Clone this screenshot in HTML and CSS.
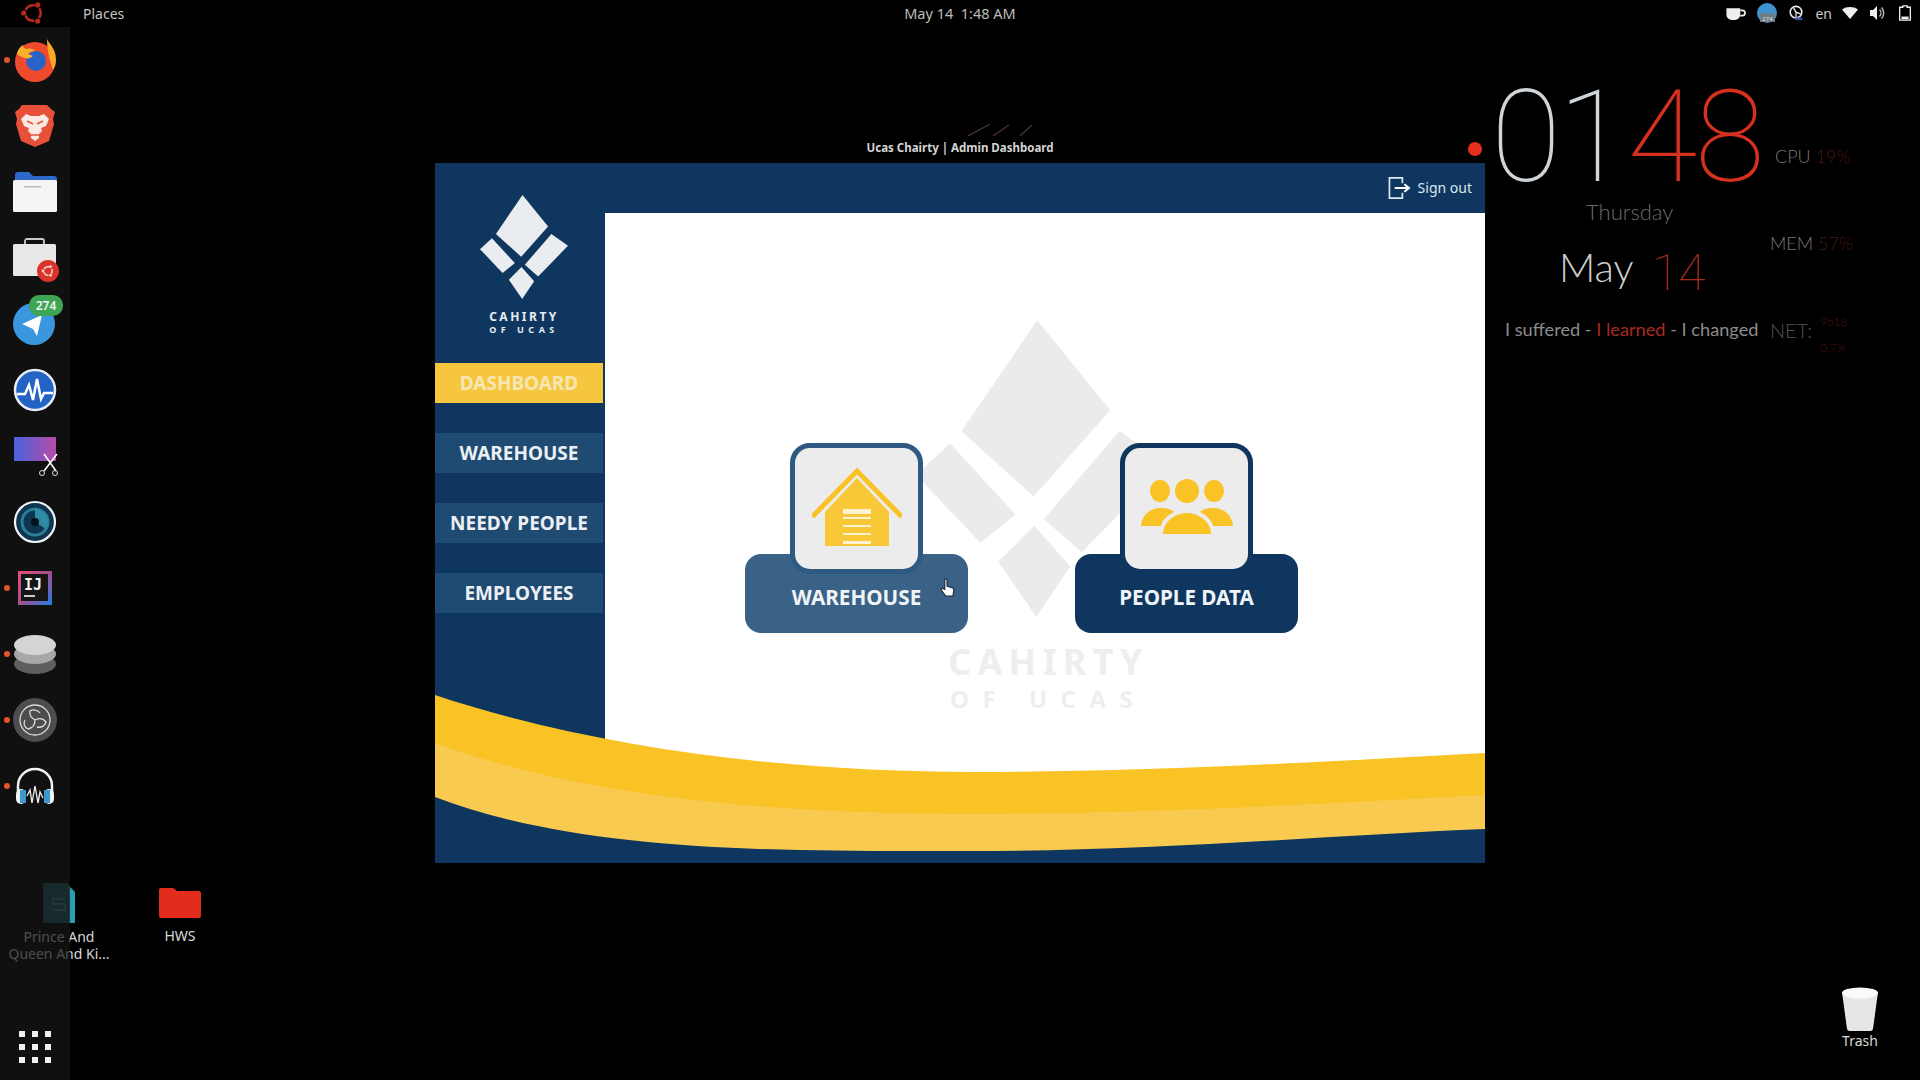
FILE: index.html
```html
<!DOCTYPE html>
<html lang="en">
<head>
<meta charset="utf-8">
<title>Ucas Chairty | Admin Dashboard</title>
<link rel="stylesheet" href="styles.css">
</head>
<body>
<svg class="defs" width="0" height="0">
  <symbol id="logo" viewBox="150 255 265 313">
    <path d="M278 255 355 350 274 441 198 372Z"/>
    <path d="M150 418 186 385 255 460 218 490Z"/>
    <path d="M285 465 365 372 415 408 325 500Z"/>
    <path d="M237 510 275 472 313 515 277 568Z"/>
  </symbol>
  <symbol id="ubuntu" viewBox="0 0 24 24">
    <circle cx="12" cy="12" r="7.2" fill="none" stroke="currentColor" stroke-width="2.4" stroke-dasharray="10 5.08" stroke-dashoffset="5"/>
    <circle cx="3.400" cy="12" r="2.400" fill="currentColor"/>
    <circle cx="16.300" cy="4.550" r="2.400" fill="currentColor"/>
    <circle cx="16.300" cy="19.450" r="2.400" fill="currentColor"/>
  </symbol>
</svg>
<div class="screen">
  <header class="topbar">
    <div class="topbar-left">
      <svg class="ubuntu-logo"><use href="#ubuntu"/></svg>
      <span class="places">Places</span>
    </div>
    <div class="clock-center">May 14&nbsp;&nbsp;1:48 AM</div>
    <div class="tray">
      <svg class="tray-icon tray-cup" viewBox="0 0 20 16"><path d="M1 3h13v6a5 5 0 0 1-5 5H6a5 5 0 0 1-5-5z" fill="#eee"/><path d="M14 5h2a2 2 0 0 1 0 5h-2" fill="none" stroke="#eee" stroke-width="1.600"/></svg>
      <svg class="tray-icon tray-tg" viewBox="0 0 20 20"><circle cx="10" cy="10" r="10" fill="#3d93cf"/><rect x="3" y="10" width="15" height="9" fill="#6d7d88"/><text x="10.500" y="17.500" class="tray-num">274</text></svg>
      <svg class="tray-icon" viewBox="0 0 18 18"><circle cx="9" cy="8" r="6.500" fill="none" stroke="#eee" stroke-width="1.800"/><path d="M9 8 6 3M9 8l5 2M9 8v6" stroke="#eee" stroke-width="1.400"/><rect x="8" y="14" width="8" height="3" fill="#3856a8"/></svg>
      <span class="tray-lang">en</span>
      <svg class="tray-icon tray-wifi" viewBox="0 0 16 12"><path d="M0 2.500C4-.8 12-.8 16 2.500L8 12Z" fill="#eee"/></svg>
      <svg class="tray-icon" viewBox="0 0 16 16"><path d="M1 5h3l4-4v14l-4-4H1z" fill="#eee"/><path d="M10.500 4.500a5 5 0 0 1 0 7M12.500 2.500a8 8 0 0 1 0 11" fill="none" stroke="#bbb" stroke-width="1.400"/></svg>
      <svg class="tray-icon" viewBox="0 0 14 18"><path d="M4.500 1h5v1.500H13V17H1V2.500h3.500z" fill="none" stroke="#eee" stroke-width="1.500"/><rect x="3" y="13" width="8" height="3" fill="#eee"/></svg>
    </div>
  </header>

  <nav class="dock">
    <div class="dock-item running">
      <svg class="dock-icon" viewBox="0 0 48 48"><circle cx="24" cy="26" r="20" fill="#f04a2d"/><path d="M36 3c2 5 9 9 9 21 0 4-1 7-3 10-2-7-6-17-6-31Z" fill="#f9a825"/><circle cx="25" cy="25" r="10" fill="#2a62c8"/><path d="M6 18c1-5 4-8 6-9 0 3 2 4 4 4 4-1 6 0 8 2-3 0-6 1-7 3l5 2c-3 3-8 3-11 1-2-1-4-2-5-3Z" fill="#fbb02b"/></svg>
    </div>
    <div class="dock-item">
      <svg class="dock-icon" viewBox="0 0 48 48"><path d="M11 3h25l4 4 4 3-2 7 1 5-5 17-14 6-14-6L5 22l1-5-2-7 4-3Z" fill="#e8503a"/><path d="M15 12l5 2h8l5-2 5 5-3 7-5 2 1 3-3 3v4l-4 3-4-3v-4l-3-3 1-3-5-2-3-7Z" fill="#fbe9e4"/><path d="M16 19l6 3M32 19l-6 3M20 33h8" stroke="#e8503a" stroke-width="1.600"/></svg>
    </div>
    <div class="dock-item">
      <svg class="dock-icon" viewBox="0 0 48 48"><path d="M4 7a3 3 0 0 1 3-3h11l4 4h21a3 3 0 0 1 3 3v5H4Z" fill="#2d68cc"/><rect x="2" y="12" width="44" height="32" rx="1.500" fill="#f5f5f5"/><rect x="13" y="18" width="17" height="1.500" fill="#bbb"/></svg>
    </div>
    <div class="dock-item">
      <svg class="dock-icon" viewBox="0 0 48 48"><path d="M14 11V7a2 2 0 0 1 2-2h15a2 2 0 0 1 2 2v4" fill="none" stroke="#ccc" stroke-width="1.800"/><rect x="2" y="10" width="43" height="32" rx="1.500" fill="#e8e8e8"/><circle cx="37" cy="37" r="11" fill="#d8342b"/><svg x="30" y="30" width="14" height="14" color="#f6d6d0"><use href="#ubuntu"/></svg></svg>
    </div>
    <div class="dock-item">
      <svg class="dock-icon" viewBox="0 0 48 48"><circle cx="23" cy="24" r="21" fill="#3a97dd"/><path d="M11 24 31 15 26 36 22 29Z" fill="#fff"/></svg>
      <span class="badge">274</span>
    </div>
    <div class="dock-item">
      <svg class="dock-icon" viewBox="0 0 48 48"><circle cx="24" cy="24" r="20" fill="#2263c4" stroke="#e8eef8" stroke-width="2.500"/><path d="M6 28h8l4-9 4 15 4-21 4 20 3-6h9" fill="none" stroke="#fff" stroke-width="2.500"/></svg>
    </div>
    <div class="dock-item">
      <svg class="dock-icon" viewBox="0 0 48 48"><defs><linearGradient id="shot" x1="0" x2="1"><stop offset="0" stop-color="#4a62dc"/><stop offset="1" stop-color="#b84ba8"/></linearGradient></defs><rect x="3" y="5" width="42" height="24" fill="url(#shot)"/><path d="M33 22l12 17M46 22 33 39" stroke="#fff" stroke-width="1.500"/><circle cx="31" cy="41" r="2.500" fill="none" stroke="#ddd"/><circle cx="44" cy="41" r="2.500" fill="none" stroke="#ddd"/></svg>
    </div>
    <div class="dock-item">
      <svg class="dock-icon" viewBox="0 0 48 48"><circle cx="24" cy="24" r="20" fill="#0f3551" stroke="#f0f4f6" stroke-width="2.200"/><circle cx="24" cy="24" r="13" fill="none" stroke="#2a7f96" stroke-width="3"/><path d="M24 24V11a13 13 0 0 1 11 20Z" fill="#2f8ba6"/><circle cx="24" cy="24" r="4" fill="#04121f"/></svg>
    </div>
    <div class="dock-item running">
      <svg class="dock-icon" viewBox="0 0 48 48"><defs><linearGradient id="ij" x1="0" y1="0" x2="1" y2="1"><stop offset="0" stop-color="#ee4b7c"/><stop offset=".5" stop-color="#a4508f"/><stop offset="1" stop-color="#1f7de0"/></linearGradient></defs><rect x="7" y="7" width="34" height="34" fill="url(#ij)"/><rect x="10" y="10" width="27" height="27" fill="#151515"/><text x="13" y="26" class="ij-text">IJ</text><rect x="13" y="31" width="11" height="2" fill="#ccc"/></svg>
    </div>
    <div class="dock-item running">
      <svg class="dock-icon" viewBox="0 0 48 48"><ellipse cx="24" cy="34" rx="21" ry="10" fill="#5e5e5e"/><ellipse cx="24" cy="24" rx="21" ry="10" fill="#a8a8a8"/><ellipse cx="24" cy="15" rx="21" ry="10" fill="#d4d4d4"/></svg>
    </div>
    <div class="dock-item running">
      <svg class="dock-icon" viewBox="0 0 48 48"><circle cx="24" cy="24" r="22" fill="#4d4d4d"/><circle cx="24" cy="24" r="15" fill="none" stroke="#ddd" stroke-width="1.300"/><path d="M24 24c-3-2-6-4-5-9 3-2 8-1 10 2M24 24c0 4-2 8-7 9-4-2-5-6-3-9M24 24c4-2 8-2 11 2-1 4-5 6-9 5" fill="none" stroke="#dcdcdc" stroke-width="1.300"/></svg>
    </div>
    <div class="dock-item running">
      <svg class="dock-icon" viewBox="0 0 48 48"><path d="M7 30V24a17 17 0 0 1 34 0v6" fill="none" stroke="#f4f4f4" stroke-width="2.500"/><rect x="5" y="27" width="10" height="15" rx="5" fill="#f2f2f2"/><rect x="9" y="28" width="6" height="13" fill="#3a97cf"/><rect x="33" y="27" width="10" height="15" rx="5" fill="#f2f2f2"/><rect x="33" y="28" width="6" height="13" fill="#3a97cf"/><path d="M16 34l3-6 2 13 3-17 3 17 2-11 3 6" fill="none" stroke="#e8e8e8" stroke-width="1.400"/></svg>
    </div>
    <div class="dock-spacer"></div>
    <div class="apps-grid">
      <i></i><i></i><i></i><i></i><i></i><i></i><i></i><i></i><i></i>
    </div>
  </nav>

  <div class="desk-icon desk-sublime">
    <svg class="desk-glyph" viewBox="0 0 32 40"><path d="M0 0h23l9 9v31H0Z" fill="#1d5a62"/><path d="M23 0l9 9v31h-6V5Z" fill="#2b9bb0"/><path d="M22 16H10v5h12v6H9" fill="none" stroke="#5b8d93" stroke-width="1.500"/></svg>
    <span>Prince And<br>Queen And Ki...</span>
  </div>
  <div class="desk-icon desk-hws">
    <svg class="desk-glyph" viewBox="0 0 42 30"><path d="M0 2a2 2 0 0 1 2-2h12l4 3h22a2 2 0 0 1 2 2v23a2 2 0 0 1-2 2H2a2 2 0 0 1-2-2Z" fill="#e42c1c"/></svg>
    <span>HWS</span>
  </div>
  <div class="desk-icon desk-trash">
    <svg class="desk-glyph" viewBox="0 0 38 44"><path d="M1 5 6 42a3 3 0 0 0 3 2h20a3 3 0 0 0 3-2l5-37Z" fill="#e6e6e6"/><ellipse cx="19" cy="6" rx="18" ry="5.500" fill="#fafafa"/></svg>
    <span>Trash</span>
  </div>

  <section class="widget">
    <div class="w-time"><span class="w-white">01</span><span class="w-red">48</span></div>
    <div class="w-day">Thursday</div>
    <div class="w-month">May</div>
    <div class="w-date">14</div>
    <div class="w-motto">I suffered - <b>I learned</b> - I changed</div>
    <div class="w-stat w-cpu">CPU <b>19%</b></div>
    <div class="w-stat w-mem">MEM <b>57%</b></div>
    <div class="w-stat w-net">NET:</div>
    <div class="w-netval w-net1">9b18</div>
    <div class="w-netval w-net2">0.7%</div>
  </section>

  <svg class="streaks" viewBox="0 0 70 14"><path d="M0 14 22 2M25 14 41 3M52 14 64 3" stroke="#4d3030" stroke-width="1.400" fill="none"/></svg>
  <div class="win-title">Ucas Chairty | Admin Dashboard</div>
  <div class="rec-dot"></div>

  <main class="window">
    <aside class="sidebar">
      <div class="brand">
        <svg class="brand-mark"><use href="#logo"/></svg>
        <div class="brand-name">CAHIRTY</div>
        <div class="brand-sub">OF UCAS</div>
      </div>
      <div class="menu">
        <a class="menu-item active">DASHBOARD</a>
        <a class="menu-item">WAREHOUSE</a>
        <a class="menu-item">NEEDY PEOPLE</a>
        <a class="menu-item">EMPLOYEES</a>
      </div>
    </aside>
    <div class="panel">
      <div class="panel-head">
        <a class="signout">
          <svg class="signout-icon" viewBox="0 0 24 24"><path d="M15 7V1.500H1.500v21H15V17" fill="none" stroke="#dbe6f2" stroke-width="1.800"/><path d="M7 12h14M17 8l5 4-5 4" fill="none" stroke="#fff" stroke-width="2"/></svg>
          <span>Sign out</span>
        </a>
      </div>
      <div class="content">
        <div class="watermark">
          <svg class="wm-mark"><use href="#logo"/></svg>
          <div class="wm-name">CAHIRTY</div>
          <div class="wm-sub">OF UCAS</div>
        </div>
        <div class="cards">
          <div class="card card-hover">
            <div class="card-icon">
              <svg class="card-glyph" viewBox="0 0 90 84"><path d="M2 50 45 6l43 44" fill="none" stroke="#f9c225" stroke-width="5" stroke-linecap="round"/><path d="M13 47 45 13l32 34v34H13Z" fill="#f9c838"/><rect x="31" y="44" width="28" height="5" fill="#fff3cf"/><rect x="31" y="52" width="28" height="2" fill="#fff3cf"/><rect x="31" y="60" width="28" height="2" fill="#fff3cf"/><rect x="31" y="68" width="28" height="2" fill="#fff3cf"/><rect x="31" y="76" width="28" height="3" fill="#fff3cf"/></svg>
            </div>
            <div class="card-label">WAREHOUSE</div>
            <svg class="hand" viewBox="0 0 16 22"><path d="M5 2c0-1.500 2.500-1.500 2.500 0v7l6 2c1 .5 1.500 1 1.500 2l-1 7H6L1 13c0-2 2-2 4-.5Z" fill="#fff" stroke="#1d2b3a" stroke-width="1.300"/></svg>
          </div>
          <div class="card">
            <div class="card-icon">
              <svg class="card-glyph people" viewBox="0 0 92 62"><ellipse cx="19" cy="12" rx="10" ry="11" fill="#f9c225"/><ellipse cx="46" cy="12" rx="12" ry="12" fill="#f9c225"/><ellipse cx="73" cy="12" rx="10" ry="11" fill="#f9c225"/><path d="M0 47c1-12 10-18 20-18 5 0 10 1 13 4-6 3-12 8-13 14Z" fill="#f9c225"/><path d="M92 47c-1-12-10-18-20-18-5 0-10 1-13 4 6 3 12 8 13 14Z" fill="#f9c225"/><path d="M22 55c0-12 12-21 24-21s24 9 24 21Z" fill="#f9c225"/></svg>
            </div>
            <div class="card-label">PEOPLE DATA</div>
          </div>
        </div>
      </div>
    </div>
    <svg class="wave" viewBox="0 0 1050 700" preserveAspectRatio="none">
      <path d="M0 532C150 582 340 609 541 609 720 609 900 598 1050 590V700H0Z" fill="#f9c225"/>
      <path d="M0 580C150 635 340 651 541 651 720 651 900 640 1050 632V700H0Z" fill="#f8cb50"/>
      <path d="M0 634C150 692 360 688 541 688 720 688 900 672 1050 666V700H0Z" fill="#0e365f"/>
    </svg>
  </main>
</div>
</body>
</html>
```
FILE: styles.css
```css
* { box-sizing: border-box; }
html, body { margin: 0; height: 100%; background: #000; }
body { font-family: "Noto Sans", "Open Sans", sans-serif; color: #ddd; overflow: hidden; }
.defs { position: absolute; }
.screen { position: relative; width: 1920px; height: 1080px; background: #000; overflow: hidden; }

/* top bar */
.topbar { position: relative; height: 27px; padding-bottom: 2px; display: grid; grid-template-columns: 1fr auto 1fr; align-items: center; font-size: 14px; color: #c8c8c8; }
.topbar-left { display: flex; align-items: center; padding-left: 20px; gap: 37px; }
.ubuntu-logo { width: 26px; height: 26px; color: #b8271c; }
.places { color: #c4c4c4; }
.clock-center { font-size: 14.5px; color: #bdbdbd; }
.tray { display: flex; justify-content: flex-end; align-items: center; gap: 10px; padding-right: 6px; }
.tray-icon { width: 18px; height: 16px; }
.tray-cup { width: 22px; height: 17px; }
.tray-tg { width: 20px; height: 20px; }
.tray-wifi { width: 16px; height: 12px; }
.tray-num { font-size: 6px; fill: #ddd; text-anchor: middle; font-family: "Noto Sans", sans-serif; }
.tray-lang { font-size: 14px; color: #c8c8c8; }

/* dock */
.dock { position: relative; z-index: 2; width: 70px; height: 1053px; background: rgba(22, 22, 22, .72); display: flex; flex-direction: column; align-items: center; }
.dock-item { position: relative; width: 70px; height: 66px; flex: none; display: flex; align-items: center; justify-content: center; }
.dock-icon { width: 48px; height: 48px; }
.ij-text { font-family: "DejaVu Sans Mono", monospace; font-weight: 700; font-size: 15px; fill: #f2f2f2; }
.dock-item.running::before { content: ""; position: absolute; left: 4px; top: 30px; width: 6px; height: 6px; border-radius: 50%; background: #e2562a; }
.badge { position: absolute; left: 29px; top: 4px; width: 34px; height: 21px; border-radius: 10px; background: #3ea653; color: #f2f2f2; font-size: 12px; font-weight: 600; text-align: center; line-height: 21px; }
.dock-spacer { flex: 1; }
.apps-grid { display: grid; grid-template-columns: repeat(3, 6px); gap: 7px; margin-bottom: 17px; }
.apps-grid i { width: 6px; height: 6px; background: #f0f0f0; }

/* desktop icons */
.desk-icon { position: absolute; z-index: 1; display: flex; flex-direction: column; align-items: center; text-align: center; font-size: 14px; line-height: 17px; color: #d8d8d8; }
.desk-icon span { margin-top: 5px; }
.desk-sublime { left: 0; top: 883px; width: 118px; }
.desk-sublime .desk-glyph { width: 32px; height: 40px; }
.desk-hws { left: 140px; top: 888px; width: 80px; }
.desk-hws .desk-glyph { width: 42px; height: 30px; }
.desk-hws span { margin-top: 9px; }
.desk-trash { left: 1820px; top: 987px; width: 80px; }
.desk-trash .desk-glyph { width: 38px; height: 44px; }
.desk-trash span { margin-top: 1px; }

/* conky widget */
.widget { position: absolute; left: 1480px; top: 60px; width: 420px; height: 320px; font-family: "Lato", "Roboto", sans-serif; font-weight: 300; }
.widget > div { position: absolute; white-space: nowrap; }
.w-time { left: 11px; top: 27px; font-family: "Roboto", sans-serif; font-weight: 100; font-size: 128px; line-height: 100px; display: flex; gap: 2px; }
.w-white { color: #cfd4d8; letter-spacing: -3px; }
.w-red { color: #d8301f; letter-spacing: -2.500px; }
.w-day { left: 106px; top: 139px; font-size: 22px; line-height: 26px; color: #6a6a6a; }
.w-month { left: 79px; top: 183px; font-size: 40px; line-height: 48px; color: #cfcfcf; }
.w-date { left: 172px; top: 184px; font-family: "Roboto", sans-serif; font-weight: 100; font-size: 50px; line-height: 58px; color: #a82a1f; letter-spacing: -1px; }
.w-motto { left: 25px; top: 258px; font-size: 18.2px; color: #8c8c8c; font-weight: 400; }
.w-motto b { color: #a82a1f; font-weight: 400; }
.w-stat { font-size: 18px; color: #777; }
.w-stat b { color: #4a1610; font-weight: 300; }
.w-cpu { left: 295px; top: 85px; }
.w-mem { left: 290px; top: 172px; }
.w-net { left: 290px; top: 258px; font-size: 20px; color: #555; }
.w-netval { font-size: 12px; color: #4c1510; }
.w-net1 { left: 340px; top: 254px; }
.w-net2 { left: 340px; top: 280px; }

/* window furniture */
.streaks { position: absolute; left: 968px; top: 122px; width: 70px; height: 14px; }
.win-title { position: absolute; left: 435px; top: 140px; width: 1050px; text-align: center; font-size: 11.5px; font-weight: 700; color: #d4d4d4; }
.rec-dot { position: absolute; left: 1468px; top: 142px; width: 14px; height: 14px; border-radius: 50%; background: #e5301f; }

.window { position: absolute; left: 435px; top: 163px; width: 1050px; height: 700px; background: #0e365f; display: flex; }
.sidebar { width: 170px; flex: none; position: relative; }
.brand { height: 200px; padding-top: 32px; display: flex; flex-direction: column; align-items: center; color: #e8ecf0; font-weight: 700; padding-left: 8px; }
.brand-mark { width: 88px; height: 104px; fill: #e9edf0; }
.brand-name { margin-top: 11px; font-size: 12px; line-height: 14px; letter-spacing: 2.500px; }
.brand-sub { font-size: 9px; line-height: 12px; letter-spacing: 4.500px; }
.menu { display: flex; flex-direction: column; gap: 30px; }
.menu-item { display: block; width: 168px; height: 40px; background: #1f4a72; color: #ecf0f4; font-size: 19px; font-weight: 700; line-height: 41px; text-align: center; }
.menu-item.active { background: #f6c63f; color: #f7e6b4; }
.panel { flex: 1; display: flex; flex-direction: column; }
.panel-head { height: 50px; flex: none; display: flex; justify-content: flex-end; align-items: center; padding-right: 13px; }
.signout { display: flex; align-items: center; gap: 7px; color: #dde6ee; font-size: 14px; line-height: 24px; }
.signout span { margin-top: -1px; }
.signout-icon { width: 23px; height: 24px; margin-top: -1px; }
.content { flex: 1; position: relative; background: #fff; padding: 230px 0 0 140px; }
.watermark { position: absolute; left: 311px; top: 107px; width: 251px; }
.wm-mark { display: block; width: 251px; height: 297px; fill: #ebebeb; }
.wm-name, .wm-sub { position: absolute; color: #eeeeee; font-weight: 700; white-space: nowrap; }
.wm-name { left: 32px; top: 322px; font-size: 36px; line-height: 40px; letter-spacing: 6.300px; }
.wm-sub { left: 34px; top: 364px; font-size: 24px; line-height: 30px; letter-spacing: 13.500px; }
.cards { position: relative; display: flex; gap: 107px; }
.card { position: relative; width: 223px; display: flex; flex-direction: column; align-items: center; }
.card-icon { position: relative; z-index: 1; width: 133px; height: 131px; margin-bottom: -20px; background: #ececec; border: 5px solid #0e365f; border-radius: 20px; display: flex; align-items: center; justify-content: center; }
.card-hover .card-icon { border-color: #2e5a82; }
.card-label { width: 223px; height: 79px; padding-top: 23px; border-radius: 16px; background: #0e365f; color: #f1f4f7; font-size: 20.7px; font-weight: 700; line-height: 40px; text-align: center; }
.card-hover .card-label { background: #3a6287; }
.card-glyph { width: 90px; height: 84px; margin-top: -3px; }
.card-glyph.people { width: 92px; height: 62px; margin-top: 2px; }
.hand { position: absolute; left: 195px; top: 135px; width: 15px; height: 20px; }
.wave { position: absolute; left: 0; top: 0; width: 1050px; height: 700px; pointer-events: none; }
```
